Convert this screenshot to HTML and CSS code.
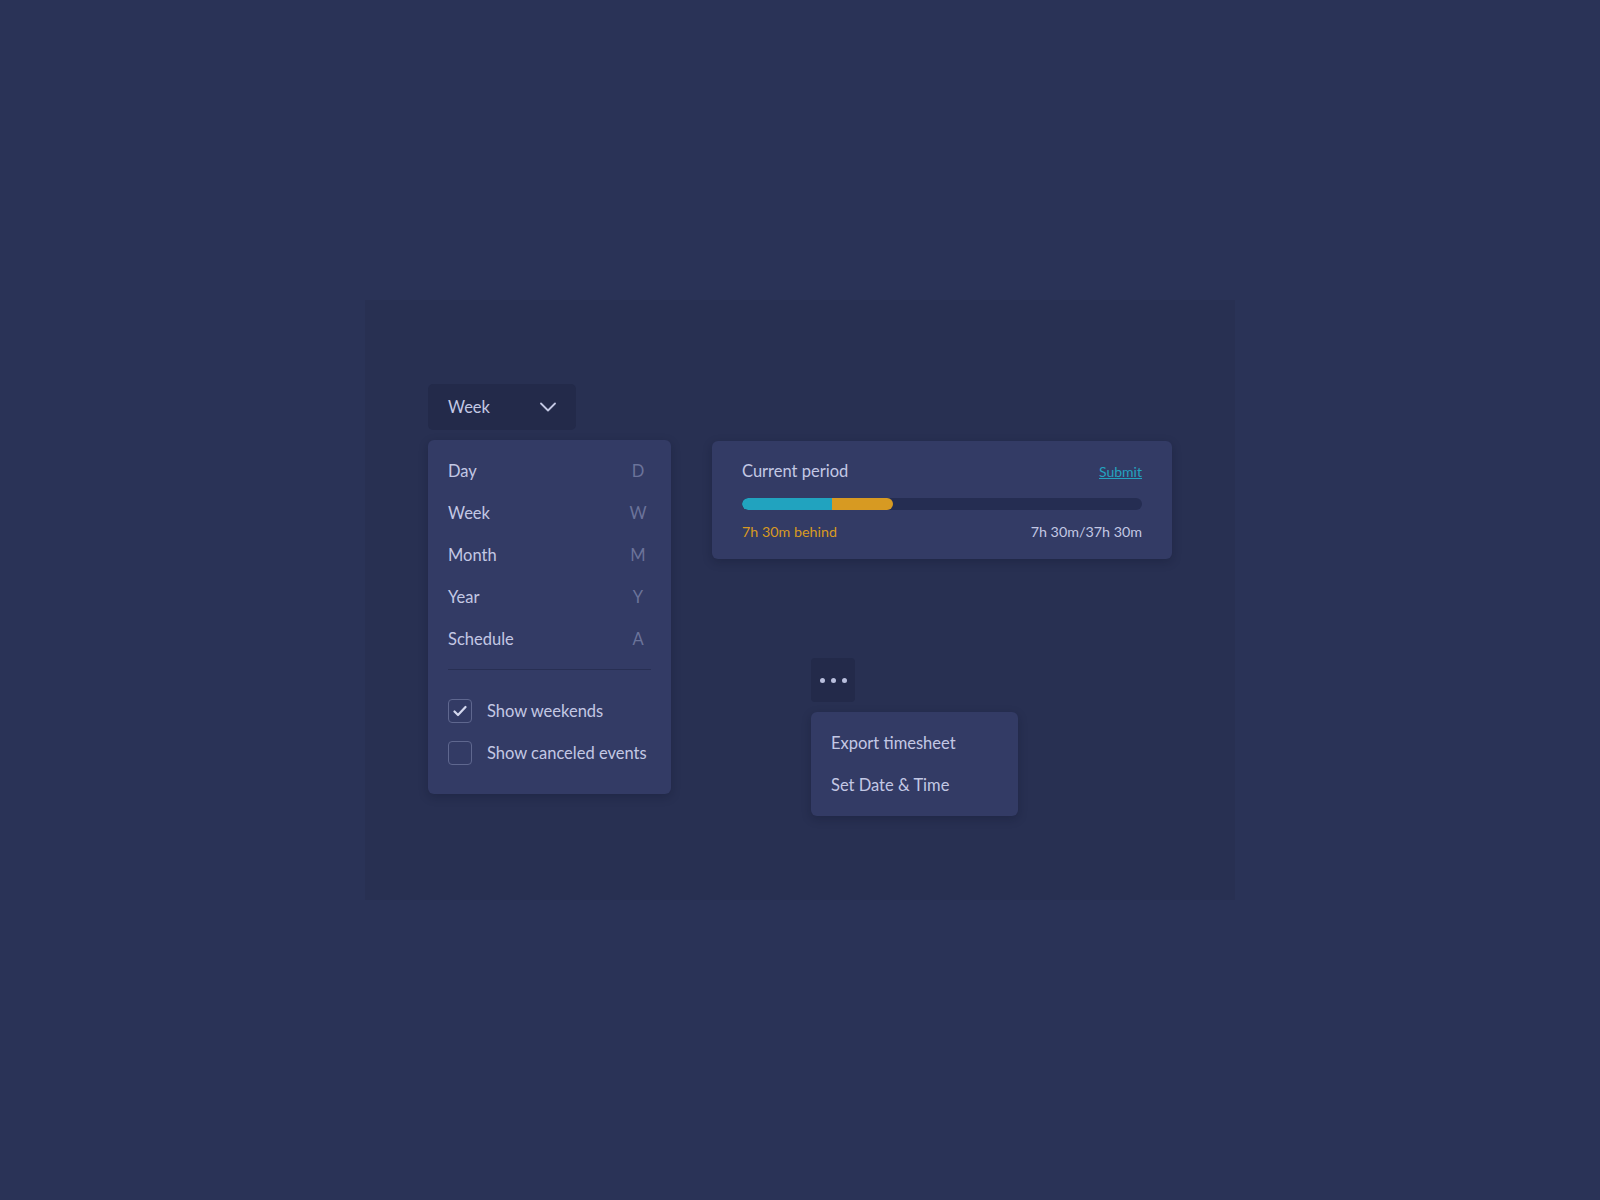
FILE: index.html
```html
<!DOCTYPE html>
<html>
  <head>
    <title>Calendar view controls</title>
    <link rel="stylesheet" href="styles.css">
  </head>
  <body>
    <div class="stage">
      <div class="left-column">
        <button class="view-select" type="button">
          <span>Week</span>
          <svg class="chevron" width="16" height="10" viewBox="0 0 16 10">
            <path d="M1 1.5 L8 8.5 L15 1.5" fill="none" stroke="currentColor" stroke-width="1.8" stroke-linecap="round" stroke-linejoin="round"/>
          </svg>
        </button>
        <div class="menu view-menu">
          <div class="menu-item"><span>Day</span><span class="shortcut">D</span></div>
          <div class="menu-item"><span>Week</span><span class="shortcut">W</span></div>
          <div class="menu-item"><span>Month</span><span class="shortcut">M</span></div>
          <div class="menu-item"><span>Year</span><span class="shortcut">Y</span></div>
          <div class="menu-item"><span>Schedule</span><span class="shortcut">A</span></div>
          <div class="divider"></div>
          <label class="check-row">
            <span class="checkbox checked">
              <svg width="14" height="12" viewBox="0 0 14 12">
                <path d="M1.5 6.5 L5 10 L12.5 2" fill="none" stroke="currentColor" stroke-width="2.2" stroke-linecap="round" stroke-linejoin="round"/>
              </svg>
            </span>
            Show weekends
          </label>
          <label class="check-row">
            <span class="checkbox"></span>
            Show canceled events
          </label>
        </div>
      </div>
      <div class="right-column">
        <div class="period-card">
          <div class="period-head">
            <span>Current period</span>
            <a href="#" class="submit-link">Submit</a>
          </div>
          <div class="progress">
            <div class="progress-done"></div>
            <div class="progress-behind"></div>
          </div>
          <div class="period-foot">
            <span class="behind">7h 30m behind</span>
            <span>7h 30m/37h 30m</span>
          </div>
        </div>
        <div class="more-block">
          <button class="more-button" type="button">
            <span class="dot"></span><span class="dot"></span><span class="dot"></span>
          </button>
          <div class="menu more-menu">
            <div class="menu-item">Export timesheet</div>
            <div class="menu-item">Set Date &amp; Time</div>
          </div>
        </div>
      </div>
    </div>
  </body>
</html>
```
FILE: styles.css
```css
/* Dark navy calendar controls */
body {
  margin: 0;
  min-height: 100vh;
  display: flex;
  justify-content: center;
  align-items: center;
  background-color: #2a3357;
  font-family: Lato, "Open Sans", sans-serif;
  color: #c3c8e4;
  font-size: 16.5px;
}

.stage {
  width: 870px;
  height: 600px;
  box-sizing: border-box;
  padding: 84px 0 0 63px;
  display: flex;
  background-color: #283052;
}

.left-column {
  width: 243px;
  display: flex;
  flex-direction: column;
  gap: 10px;
}

.view-select {
  width: 148px;
  height: 46px;
  box-sizing: border-box;
  padding: 0 20px;
  display: flex;
  align-items: center;
  justify-content: space-between;
  border: none;
  border-radius: 5px;
  background-color: #232a4a;
  color: #c3c8e4;
  font-family: inherit;
  font-size: 16.5px;
}

.menu {
  background-color: #333b65;
  border-radius: 6px;
  box-shadow: 0 3px 10px rgba(10, 14, 35, 0.25);
}

.view-menu {
  padding: 10px 20px 20px;
}

.menu-item {
  height: 42px;
  display: flex;
  align-items: center;
  justify-content: space-between;
}

.shortcut {
  width: 26px;
  text-align: center;
  color: #6b739a;
}

.divider {
  height: 1px;
  margin: 9px 0 20px;
  background-color: #282f53;
}

.check-row {
  height: 42px;
  display: flex;
  align-items: center;
  gap: 15px;
}

.checkbox {
  width: 24px;
  height: 24px;
  box-sizing: border-box;
  border: 1.5px solid #5f678f;
  border-radius: 4px;
  display: flex;
  align-items: center;
  justify-content: center;
  color: #d4d8ee;
}

.right-column {
  margin-left: 41px;
  padding-top: 57px;
}

.period-card {
  width: 460px;
  box-sizing: border-box;
  padding: 20px 30px 19px;
  background-color: #333b65;
  border-radius: 6px;
  box-shadow: 0 3px 10px rgba(10, 14, 35, 0.25);
}

.period-head {
  height: 20px;
  display: flex;
  justify-content: space-between;
  align-items: center;
}

.submit-link {
  color: #23a3c0;
  font-size: 14px;
}

.progress {
  margin-top: 17px;
  height: 12px;
  display: flex;
  border-radius: 6px;
  overflow: hidden;
  background-color: #252d52;
}

.progress-done {
  width: 90px;
  background-color: #21a3bf;
  border-radius: 6px 0 0 6px;
}

.progress-behind {
  width: 61px;
  background-color: #d79a22;
  border-radius: 0 6px 6px 0;
}

.period-foot {
  margin-top: 12px;
  height: 18px;
  display: flex;
  justify-content: space-between;
  align-items: center;
  font-size: 14.3px;
}

.behind {
  color: #d99a22;
}

.more-block {
  margin: 99px 0 0 99px;
  display: flex;
  flex-direction: column;
  gap: 10px;
}

.more-button {
  width: 44px;
  height: 44px;
  padding: 0;
  display: flex;
  align-items: center;
  justify-content: center;
  gap: 6px;
  border: none;
  border-radius: 4px;
  background-color: #232a4a;
}

.dot {
  width: 5px;
  height: 5px;
  border-radius: 50%;
  background-color: #b9bfdd;
}

.more-menu {
  width: 207px;
  box-sizing: border-box;
  padding: 10px 20px 10px;
}
```
